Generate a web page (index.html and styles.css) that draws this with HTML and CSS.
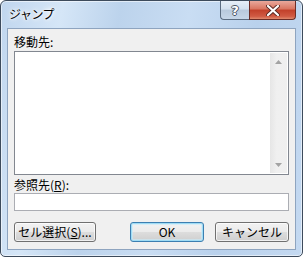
FILE: index.html
```html
<!DOCTYPE html>
<html lang="ja">
<head>
  <meta charset="UTF-8" />
  <title>ジャンプ</title>
  <link rel="stylesheet" href="styles.css">
</head>
<body>

<div class="window">
  <div class="titlebar">
    <span class="title">ジャンプ</span>
    <div class="caption-buttons">
      <div class="cap-btn help">?</div>
      <div class="cap-btn close">
        <svg width="14" height="11" viewBox="0 0 14 11">
          <path d="M2 1 L12 10 M12 1 L2 10" stroke="#5a2a24" stroke-width="4" stroke-linecap="round"/>
          <path d="M2 1 L12 10 M12 1 L2 10" stroke="#fff" stroke-width="2.2" stroke-linecap="round"/>
        </svg>
      </div>
    </div>
  </div>

  <div class="client">
    <div class="label">移動先:</div>
    <div class="listbox">
      <div class="list-items"></div>
      <div class="scrollbar">
        <div class="arrow">
          <svg width="7" height="4" viewBox="0 0 7 4"><path d="M0 4 L3.5 0 L7 4 Z" fill="#a3a3a3"/></svg>
        </div>
        <div class="track"></div>
        <div class="arrow">
          <svg width="7" height="4" viewBox="0 0 7 4"><path d="M0 0 L3.5 4 L7 0 Z" fill="#a3a3a3"/></svg>
        </div>
      </div>
    </div>

    <div class="label label-ref">参照先(<u>R</u>):</div>
    <div class="textbox"></div>

    <div class="buttons">
      <div class="btn btn-cells">セル選択(<u>S</u>)...</div>
      <div class="spacer"></div>
      <div class="btn btn-ok">OK</div>
      <div class="btn btn-cancel">キャンセル</div>
    </div>
  </div>
</div>

</body>
</html>
```

FILE: styles.css
```css
body {
  margin: 0;
  padding: 0;
  background: #ffffff;
  font-family: "Noto Sans CJK JP", "DejaVu Sans", sans-serif;
  font-size: 12px;
  color: #000;
}
.window {
  width: 303px;
  height: 257px;
  box-sizing: border-box;
  border: 1px solid #3d4b5c;
  border-radius: 6px 6px 5px 5px;
  background: linear-gradient(100deg, #c0d6ee 0%, #d5e6f7 18%, #bcd3ec 35%, #c9ddf3 55%, #b9d1ec 75%, #c4d9f1 100%);
  box-shadow: inset 0 0 0 1px rgba(255,255,255,0.55);
  display: flex;
  flex-direction: column;
  padding: 0 6px 6px 6px;
}
.titlebar {
  height: 27px;
  display: flex;
  justify-content: space-between;
  align-items: flex-start;
}
.title {
  margin: 5px 0 0 2px;
  font-size: 12px;
  line-height: 16px;
  letter-spacing: -0.5px;
  color: #000;
  text-shadow: 0 0 6px #fff, 0 0 4px #fff, 0 0 2px #fff;
}
.caption-buttons {
  display: flex;
}
.cap-btn {
  height: 19px;
  box-sizing: border-box;
  border: 1px solid #5b6c80;
  border-top: none;
  display: flex;
  align-items: center;
  justify-content: center;
}
.help {
  width: 29px;
  border-radius: 0 0 0 4px;
  border-right: none;
  background: linear-gradient(#e6eef7 0%, #d3e0ee 45%, #b8c9dc 50%, #c6d6e8 100%);
  font-family: "DejaVu Sans", sans-serif;
  font-weight: bold;
  font-size: 13px;
  color: #fff;
  text-shadow: 1px 0 0 #4a5565, -1px 0 0 #4a5565, 0 1px 0 #4a5565, 0 -1px 0 #4a5565;
}
.close {
  width: 47px;
  border-radius: 0 0 4px 0;
  border-color: #6b2d27;
  background: linear-gradient(#e9a89c 0%, #d9745f 45%, #c2402a 50%, #d05a43 85%, #e08a6e 100%);
}
.client {
  flex: 1;
  background: #f0f0f0;
  border: 1px solid #8ea4bf;
  padding: 6px 6px 0 6px;
  display: flex;
  flex-direction: column;
}
.label {
  height: 14px;
  line-height: 14px;
  margin-bottom: 2px;
}
.label-ref {
  margin-top: 3px;
  margin-bottom: 1px;
}
.listbox {
  height: 124px;
  box-sizing: border-box;
  border: 1px solid #828790;
  background: #fff;
  display: flex;
  padding: 1px;
}
.list-items {
  flex: 1;
}
.scrollbar {
  width: 17px;
  background: linear-gradient(90deg, #e6e6e6, #f0f0f0 40%, #efefef);
  display: flex;
  flex-direction: column;
}
.arrow {
  height: 17px;
  display: flex;
  align-items: center;
  justify-content: center;
}
.track {
  flex: 1;
}
.textbox {
  height: 18px;
  box-sizing: border-box;
  border: 1px solid #abadb3;
  background: #fff;
}
.buttons {
  display: flex;
  margin-top: 11px;
}
.spacer {
  flex: 1;
}
.btn {
  height: 20px;
  box-sizing: border-box;
  border: 1px solid #707070;
  border-radius: 3px;
  background: linear-gradient(#f2f2f2 0%, #ebebeb 49%, #dddddd 50%, #cfcfcf 100%);
  box-shadow: inset 0 0 0 1px rgba(255,255,255,0.7);
  display: flex;
  align-items: center;
  justify-content: center;
  line-height: 14px;
}
.btn-cells {
  width: 82px;
}
.btn-ok {
  width: 74px;
  border-color: #3c7fb1;
  box-shadow: inset 0 0 0 1px #9fdcf5, inset 0 0 0 2px rgba(200,235,250,0.6);
}
.btn-cancel {
  width: 74px;
  margin-left: 11px;
}
```
